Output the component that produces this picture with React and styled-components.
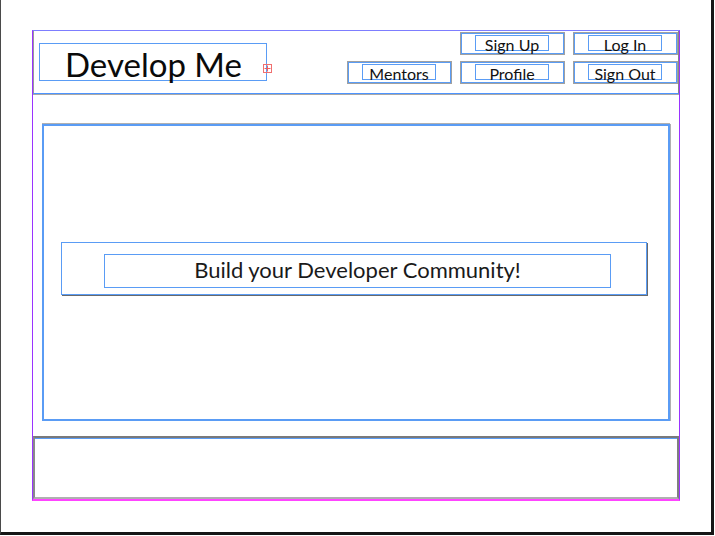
import React from "react";
import styled, { createGlobalStyle } from "styled-components";

const Global = createGlobalStyle`
  html, body { margin: 0; padding: 0; background: #ffffff; }
  body { font-family: "Lato", "Liberation Sans", sans-serif; color: #111; }
  * { box-sizing: border-box; }
`;

const Frame = styled.div`
  width: 714px;
  height: 535px;
  border-left: 1px solid #4a4a4a;
  border-right: 3px solid #161616;
  border-bottom: 3px solid #161616;
  padding: 30px 0 0 31px;
  background: #fff;
`;

const Container = styled.div`
  width: 648px;
  height: 471px;
  border-top: 1px solid #7d7dff;
  border-left: 1px solid #9a33ff;
  border-right: 1px solid #9a33ff;
  border-bottom: 2px solid #ff44ff;
  display: flex;
  flex-direction: column;
`;

const Header = styled.header`
  height: 63px;
  border-left: 1px solid #9a9a9a;
  border-right: 1px solid #888;
  border-bottom: 1px solid #4d94ff;
  box-shadow: 0 1px 0 #a8a8a8;
  display: flex;
  justify-content: space-between;
  align-items: flex-start;
  padding: 1px 0 0 5px;
`;

const LogoBox = styled.div`
  position: relative;
  margin-top: 11px;
  width: 228px;
  height: 38px;
  border: 1px solid #5a9cf5;
  padding-left: 25px;
  font-size: 33px;
  line-height: 41px;
  white-space: nowrap;
  color: #0a0a0a;
`;

const AddBadge = styled.span`
  position: absolute;
  right: -6px;
  top: 20px;
  width: 9px;
  height: 9px;
  border: 1px solid #f07070;
  display: flex;
  align-items: center;
  justify-content: center;
`;

const Nav = styled.nav`
  display: grid;
  grid-template-columns: repeat(3, 105px);
  grid-auto-rows: 23px;
  column-gap: 8px;
  row-gap: 6px;
`;

const NavButton = styled.div`
  grid-column: ${(p) => p.$col};
  border: 1px solid #a0a0a0;
  box-shadow: inset 0 0 0 1px #5a9cf5;
  padding: 2px 0 0 14px;
`;

const NavLabel = styled.div`
  width: 74px;
  height: 16px;
  border: 1px solid #5a9cf5;
  font-size: 16px;
  line-height: 17px;
  text-align: center;
  white-space: nowrap;
  color: #111;
`;

const Main = styled.main`
  margin: 30px 9px 0 9px;
  height: 297px;
  border: 2px solid #5a9cf5;
  box-shadow: 0 -1px 0 #b0b0b0, 1px 0 0 #b0b0b0;
  display: flex;
  align-items: center;
  justify-content: center;
  padding: 0 21px 8px 17px;
`;

const Hero = styled.section`
  width: 100%;
  height: 53px;
  border: 1px solid #5a9cf5;
  box-shadow: 1px 1px 0 #6a6a6a;
  display: flex;
  align-items: flex-start;
  padding: 11px 35px 0 42px;
`;

const HeroTitle = styled.h1`
  margin: 0;
  width: 100%;
  height: 34px;
  border: 1px solid #5a9cf5;
  font-family: "Lato", "Open Sans", sans-serif;
  font-weight: 400;
  font-size: 22px;
  line-height: 30px;
  text-align: center;
  color: #1a1a1a;
`;

const Footer = styled.footer`
  margin-top: 15px;
  height: 63px;
  border-top: 2px solid #7a7a7a;
  border-left: 2px solid #8a8a8a;
  border-right: 2px solid #808080;
  border-bottom: 2px solid #b0b0b0;
  box-shadow: inset 0 1px 0 #5a9cf5;
`;

const Plus = () => (
  <svg width="7" height="7" viewBox="0 0 7 7">
    <path d="M3.5 0.5V6.5M0.5 3.5H6.5" stroke="#f06060" strokeWidth="1" />
  </svg>
);

const navItems = [
  { label: "Sign Up", col: 2 },
  { label: "Log In", col: 3 },
  { label: "Mentors", col: 1 },
  { label: "Profile", col: 2 },
  { label: "Sign Out", col: 3 },
];

export default function App() {
  return (
    <>
      <Global />
      <Frame>
        <Container>
          <Header>
            <LogoBox>
              Develop Me
              <AddBadge>
                <Plus />
              </AddBadge>
            </LogoBox>
            <Nav>
              {navItems.map((item) => (
                <NavButton key={item.label} $col={item.col}>
                  <NavLabel>{item.label}</NavLabel>
                </NavButton>
              ))}
            </Nav>
          </Header>
          <Main>
            <Hero>
              <HeroTitle>Build your Developer Community!</HeroTitle>
            </Hero>
          </Main>
          <Footer />
        </Container>
      </Frame>
    </>
  );
}
